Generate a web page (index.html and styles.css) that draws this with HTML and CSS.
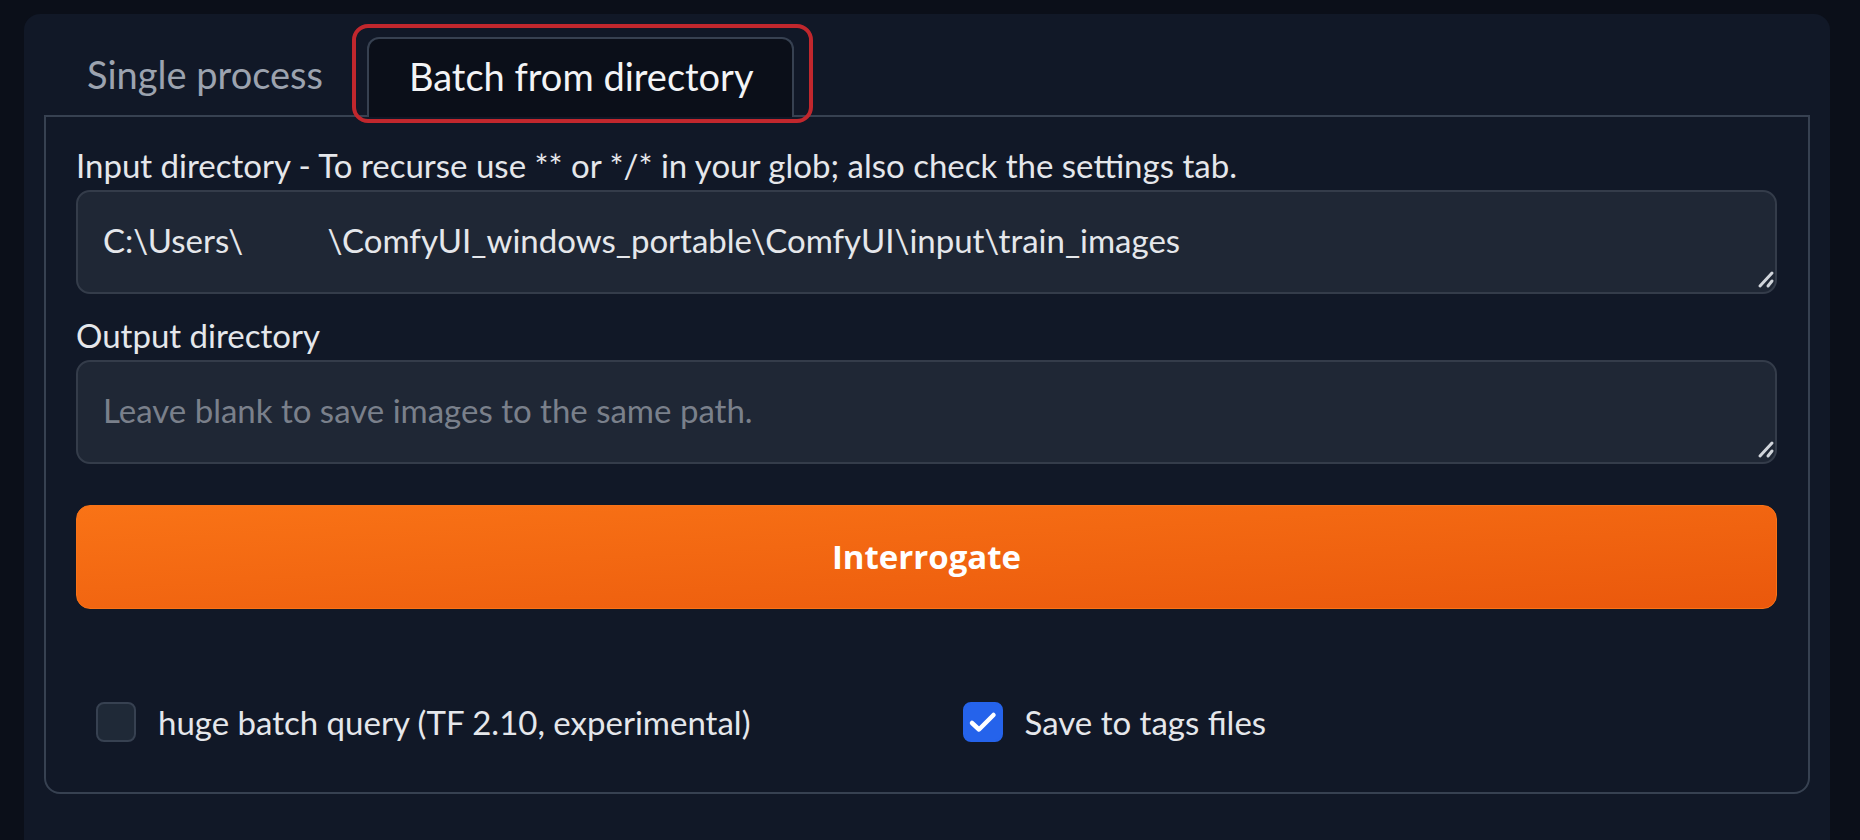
FILE: index.html
```html
<!DOCTYPE html>
<html lang="en">
<head>
<meta charset="utf-8">
<title>Batch from directory</title>
<link rel="stylesheet" href="styles.css">
</head>
<body>
<div class="panel">
  <div class="tabs">
    <div class="tab">Single process</div>
    <div class="tab active">Batch from directory<span class="highlight"></span></div>
  </div>
  <div class="tabitem">
    <div class="field">
      <label class="label">Input directory - To recurse use ** or */* in your glob; also check the settings tab.</label>
      <div class="tawrap">
        <textarea class="textarea" rows="1">C:\Users\          \ComfyUI_windows_portable\ComfyUI\input\train_images</textarea>
        <svg class="resize" viewBox="0 0 20 20" width="20" height="20"><path d="M17 3 L5 16" /><path d="M17 11 L13 16" /></svg>
      </div>
    </div>
    <div class="field field-gap">
      <label class="label">Output directory</label>
      <div class="tawrap">
        <textarea class="textarea" rows="1" placeholder="Leave blank to save images to the same path."></textarea>
        <svg class="resize" viewBox="0 0 20 20" width="20" height="20"><path d="M17 3 L5 16" /><path d="M17 11 L13 16" /></svg>
      </div>
    </div>
    <button class="primary">Interrogate</button>
    <div class="checks">
      <div class="check"><span class="box"></span><span class="check-label">huge batch query (TF 2.10, experimental)</span></div>
      <div class="check"><span class="box checked"><svg viewBox="0 0 40 40" width="40" height="40"><path d="M9 21 L16 27.5 L30.5 13" /></svg></span><span class="check-label">Save to tags files</span></div>
    </div>
  </div>
</div>
</body>
</html>
```
FILE: styles.css
```css
html, body {
  margin: 0;
  padding: 0;
  background: #0b0f19;
  height: 100%;
  overflow: hidden;
}
body {
  font-family: "Lato", "Noto Sans", sans-serif;
  color: #e5e7eb;
}
.panel {
  margin: 14px 30px 0 24px;
  padding: 21px 20px 0;
  background: #111827;
  border-radius: 16px 16px 0 0;
  min-height: 826px;
  box-sizing: border-box;
}
.tabs {
  display: flex;
  align-items: flex-end;
  gap: 2px;
}
.tab {
  font-size: 38px;
  line-height: 46px;
  padding: 16px 42px 18px 43px;
  color: #9ca3af;
  white-space: nowrap;
}
.tab.active {
  position: relative;
  z-index: 1;
  color: #f3f4f6;
  background: #0b0f19;
  border: 2px solid #374151;
  border-bottom: 0;
  border-radius: 12px 12px 0 0;
  padding: 14px 38px 18px 40px;
  margin-bottom: -2px;
}
.highlight {
  position: absolute;
  left: -17px;
  top: -15px;
  right: -21px;
  bottom: -6px;
  border: 4px solid #c1272d;
  border-radius: 16px;
  box-sizing: border-box;
  pointer-events: none;
}
.tabitem {
  border: 2px solid #374151;
  border-radius: 0 0 16px 16px;
  padding: 28px 31px 50px 30px;
}
.field {
  display: flex;
  flex-direction: column;
}
.field-gap {
  margin-top: 21px;
}
.label {
  display: block;
  font-size: 33px;
  line-height: 40px;
  color: #e5e7eb;
  margin-bottom: 5px;
}
.tawrap {
  position: relative;
}
.textarea {
  display: block;
  width: 100%;
  height: 104px;
  box-sizing: border-box;
  border: 2px solid #343c4a;
  border-radius: 14px;
  background: #1f2735;
  color: #e5e7eb;
  font-family: "Lato", "Noto Sans", sans-serif;
  font-size: 33px;
  line-height: 40px;
  padding: 28px 25px 32px;
  resize: none;
  outline: none;
  white-space: pre;
  overflow: hidden;
}
.textarea::placeholder {
  color: #7a808b;
}
.resize {
  position: absolute;
  right: 2px;
  bottom: 4px;
  fill: none;
  stroke: #d1d5db;
  stroke-width: 3;
  stroke-linecap: round;
}
.primary {
  display: block;
  width: 100%;
  height: 104px;
  margin-top: 41px;
  border: 1px solid #f97316;
  border-radius: 14px;
  background: linear-gradient(to bottom right, #f97316, #ea580c);
  color: #ffffff;
  font-family: "Open Sans", "Noto Sans", sans-serif;
  font-weight: 700;
  font-size: 33px;
  line-height: 40px;
  padding: 0;
}
.checks {
  display: grid;
  grid-template-columns: 1fr 1fr;
  column-gap: 32px;
  margin-top: 93px;
}
.check {
  display: flex;
  align-items: center;
  gap: 22px;
  padding-left: 20px;
  font-size: 33px;
  line-height: 40px;
  color: #e5e7eb;
}
.box {
  width: 40px;
  height: 40px;
  box-sizing: border-box;
  border: 2px solid #374151;
  border-radius: 8px;
  background: #1f2937;
  flex: none;
}
.box.checked {
  background: #2563eb;
  border-color: #2563eb;
}
.box.checked svg {
  display: block;
  margin: -2px;
  fill: none;
  stroke: #ffffff;
  stroke-width: 4.5;
  stroke-linecap: round;
  stroke-linejoin: round;
}
```
